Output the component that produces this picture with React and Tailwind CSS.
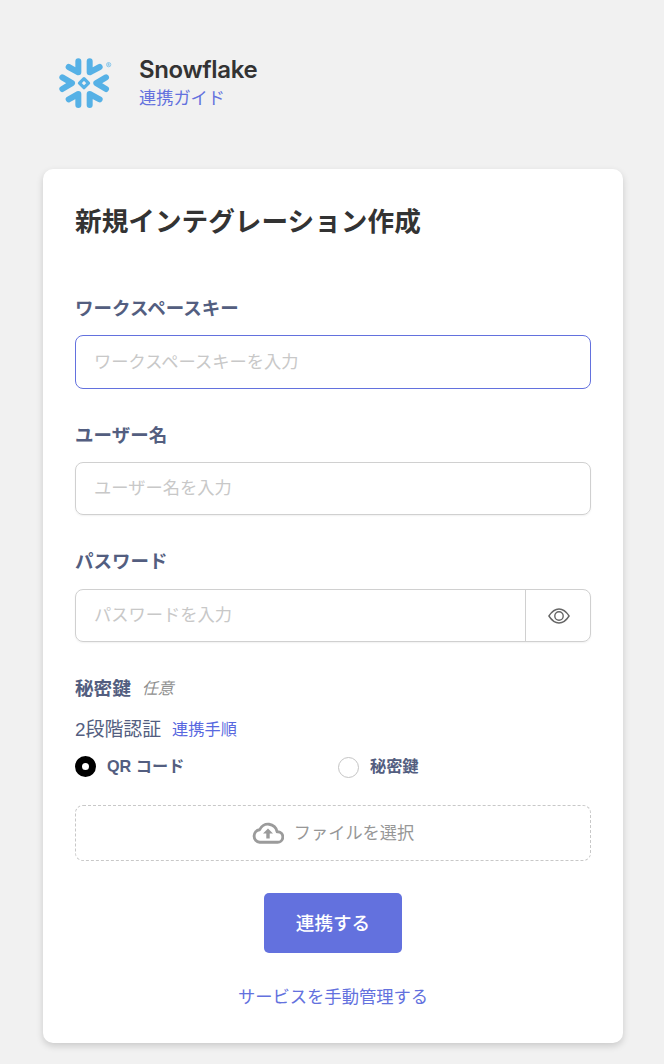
import React, { useState } from "react";
import { clsx } from "clsx";

// ---------- ICONS ----------
function SnowflakeLogo({ className }) {
  return (
    <svg viewBox="0 0 162 150" className={className} fill="none" aria-hidden="true">
      <g stroke="#56b1e6" strokeWidth="18" strokeLinecap="round" strokeLinejoin="round">
        <path d="M58 10v33L29 27" />
        <path d="M92 10v33l30-16" />
        <path d="M58 141v-33l-29 16" />
        <path d="M92 141v-33l30 16" />
        <path d="M10 58l29 17.500-29 17.500" />
        <path d="M141 58l-29 17.500 29 17.500" />
      </g>
      <path d="M75 62l13.500 13.500-13.500 13.500-13.500-13.500z" stroke="#56b1e6" strokeWidth="10" strokeLinejoin="round" />
      <circle cx="149" cy="20" r="6.500" stroke="#56b1e6" strokeWidth="1.800" />
      <path d="M147 24v-7h3.500v3.500H147m2 0l2.500 3.500" stroke="#56b1e6" strokeWidth="1.500" />
    </svg>
  );
}

function EyeIcon({ className }) {
  return (
    <svg viewBox="0 0 22 16" className={className} fill="none" stroke="#666" strokeWidth="1.400" aria-hidden="true">
      <path d="M.9 8C3.500 4 6.600 1 11 1s7.500 3 10.100 7C18.500 12 15.400 15 11 15S3.500 12 .9 8z" strokeLinejoin="round" />
      <circle cx="11" cy="8" r="4.200" />
    </svg>
  );
}

function CloudUploadIcon({ className }) {
  return (
    <svg viewBox="0 0 32 22" className={className} fill="none" aria-hidden="true">
      <path
        d="M7.700 20.300h17.500a5.300 5.300 0 0 0 .7-10.600h-.8A9.200 9.200 0 0 0 7.600 7.700 6.350 6.350 0 0 0 7.700 20.300z"
        stroke="#9b9b9b"
        strokeWidth="2.900"
        strokeLinejoin="round"
      />
      <path d="M16 6.500l5 5h-3.300v5h-3.400v-5H11z" fill="#9b9b9b" />
    </svg>
  );
}

// ---------- UI COMPONENTS ----------
function Field({ label, placeholder, type = "text", active, className, children }) {
  return (
    <label className="block">
      <span className="block h-[27px] text-[18.500px] leading-[27px] font-bold text-[#535e80]">{label}</span>
      <span
        className={clsx(
          "mt-[13px] flex overflow-hidden rounded-lg border focus-within:border-[#6371de]",
          active ? "border-[#6371de]" : "border-[#d0d0d0] shadow-[0_1px_2px_rgba(0,0,0,0.06)]",
          className
        )}
      >
        <input
          type={type}
          placeholder={placeholder}
          className="min-w-0 flex-1 px-[18px] pt-px text-[17.250px] text-[#333] outline-none placeholder:text-[#c8c8c8]"
        />
        {children}
      </span>
    </label>
  );
}

function Radio({ label, checked, onChange }) {
  return (
    <label className="flex flex-1 items-center text-[16.200px] leading-6 font-bold text-[#535e80]">
      <input type="radio" name="method" checked={checked} onChange={onChange} className="sr-only" />
      <span
        className={clsx(
          "mr-[11px] size-[21px] rounded-full",
          checked ? "border-[7px] border-black bg-white" : "mt-0.5 border border-[#c4c4c4]"
        )}
      />
      {label}
    </label>
  );
}

// ---------- MAIN COMPONENT ----------
export default function App() {
  const [method, setMethod] = useState("qr");
  const [showPassword, setShowPassword] = useState(false);

  return (
    <div className="min-h-[1064px] bg-[#f1f1f1] px-[43px] pt-[54px] font-['Liberation_Sans','Noto_Sans_CJK_JP',sans-serif]">
      {/* Service header */}
      <header className="flex h-[115px] items-start pl-4">
        <SnowflakeLogo className="mt-1 h-[50px] w-[54px]" />
        <div className="ml-[26px]">
          <h1 className="pt-px font-['Inter',sans-serif] text-[24px] leading-[30px] font-semibold tracking-[-0.35px] text-[#333]">
            Snowflake
          </h1>
          <a href="#guide" className="block text-[17.200px] leading-[27px] text-[#6371de]">連携ガイド</a>
        </div>
      </header>

      {/* Integration form */}
      <form className="h-[874px] w-[580px] rounded-[10px] bg-white px-8 pt-[33px] shadow-[0_3px_7px_rgba(0,0,0,0.16)]">
        <h2 className="h-10 text-[26.650px] leading-10 font-bold text-[#333]">新規インテグレーション作成</h2>

        <div className="mt-[53px] flex flex-col gap-[33px]">
          <Field label="ワークスペースキー" placeholder="ワークスペースキーを入力" active className="h-[54px]" />
          <Field label="ユーザー名" placeholder="ユーザー名を入力" className="h-[53px]" />
          <Field
            label="パスワード"
            placeholder="パスワードを入力"
            type={showPassword ? "text" : "password"}
            className="mt-[14px] h-[53px]"
          >
            <button
              type="button"
              onClick={() => setShowPassword(!showPassword)}
              className="flex w-[65px] items-center justify-center border-l border-[#d0d0d0]"
            >
              <EyeIcon className="ml-px h-4 w-[22px]" />
            </button>
          </Field>
        </div>

        {/* Two-factor section */}
        <div className="mt-[33px] flex h-[27px] items-center gap-[11px]">
          <span className="text-[18.600px] font-bold text-[#535e80]">秘密鍵</span>
          <span className="text-[16px] text-[#8f8f8f] italic">任意</span>
        </div>
        <div className="mt-[14px] flex h-[27px] items-center gap-[11px]">
          <span className="pt-px text-[18.900px] text-[#535e80]">2段階認証</span>
          <a href="#steps" className="text-[16.200px] text-[#5868e0]">連携手順</a>
        </div>
        <div className="mt-[11px] flex h-6 items-center gap-[10px]">
          <Radio label="QR コード" checked={method === "qr"} onChange={() => setMethod("qr")} />
          <Radio label="秘密鍵" checked={method === "key"} onChange={() => setMethod("key")} />
        </div>

        <button
          type="button"
          className="mt-[27px] flex h-[56px] w-full items-center justify-center rounded-lg border border-dashed border-[#c8c8c8] text-[17.200px] text-[#979797]"
        >
          <CloudUploadIcon className="mr-[10px] h-[22px] w-8" />
          <span className="pt-px">ファイルを選択</span>
        </button>

        <div className="mt-8 flex flex-col items-center">
          <button type="button" className="h-[60px] w-[138px] rounded-[5px] bg-[#6371de] pt-px text-[18.600px] font-medium text-white">
            連携する
          </button>
          <a href="#manual" className="mt-[31px] text-[17.300px] leading-[27px] text-[#6371de]">サービスを手動管理する</a>
        </div>
      </form>
    </div>
  );
}
